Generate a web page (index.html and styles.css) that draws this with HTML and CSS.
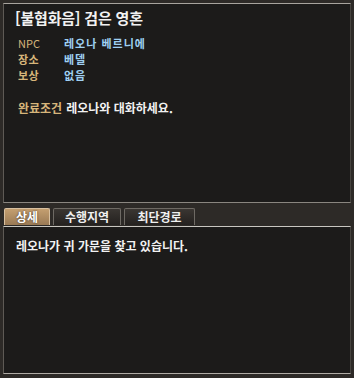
FILE: index.html
```html
<!DOCTYPE html>
<html lang="ko">
<head>
<meta charset="utf-8">
<link rel="stylesheet" href="styles.css">
</head>
<body>
<div class="frame">
  <section class="panel top">
    <h1 class="title">[불협화음] 검은 영혼</h1>
    <div class="info">
      <span class="label latin">NPC</span><span class="value">레오나 베르니에</span>
      <span class="label">장소</span><span class="value">베델</span>
      <span class="label">보상</span><span class="value">없음</span>
    </div>
    <div class="cond"><span class="label">완료조건</span><span class="text">레오나와 대화하세요.</span></div>
  </section>
  <nav class="tabs">
    <div class="tab active">상세</div>
    <div class="tab t2">수행지역</div>
    <div class="tab t3">최단경로</div>
  </nav>
  <section class="panel bottom">
    <p class="desc">레오나가 귀 가문을 찾고 있습니다.</p>
  </section>
</div>
</body>
</html>
```
FILE: styles.css
```css
* { box-sizing: border-box; }
html, body { margin: 0; padding: 0; }
body {
  width: 354px;
  height: 378px;
  background: #2d2a27;
  font-family: "Noto Sans CJK KR", "Noto Sans", sans-serif;
  font-weight: 700;
  overflow: hidden;
}
.frame {
  padding: 3px 3px 0 3px;
  display: flex;
  flex-direction: column;
  height: 378px;
}
.panel {
  background: #1c1b1a;
  border-top: 1px solid #a8a49e;
  border-left: 1px solid #5e5a55;
  border-right: 1px solid #46433f;
  border-bottom: 1px solid #8a8680;
}
.top {
  height: 200px;
  padding: 4px 0 0 11px;
}
.title {
  margin: 0;
  font-size: 15px;
  line-height: 20px;
  font-weight: 700;
  color: #f2f2f2;
  letter-spacing: -0.2px;
}
.info {
  margin-top: 7px;
  display: grid;
  grid-template-columns: 46px auto;
  padding-left: 3px;
  font-size: 11px;
  line-height: 16px;
  letter-spacing: 1px;
}
.label { color: #d6b57a; font-weight: 700; }
.info .label { letter-spacing: 0.3px; }
.info .latin { font-weight: 400; letter-spacing: 0; }
.value { color: #9fd0f2; }
.cond {
  margin-top: 16px;
  padding-left: 3px;
  font-size: 12px;
  line-height: 18px;
  display: flex;
  gap: 4px;
}
.text, .desc { color: #f2f2f2; }
.tabs {
  height: 23px;
  display: flex;
  align-items: flex-end;
  padding: 0 0 1px 1px;
  gap: 3px;
}
.tab {
  height: 17px;
  font-size: 12px;
  line-height: 15px;
  color: #f0f0f0;
  text-align: center;
  background: linear-gradient(#3a3632, #24211f);
  border: 1px solid #6e6a64;
  border-bottom: none;
  border-radius: 2px 2px 0 0;
}
.tab.active {
  width: 46px;
  background: linear-gradient(#c49f70, #9a7a55);
  border-color: #d8c0a0;
  color: #fff;
  text-shadow: 0 0 2px #3a2a18;
}
.t2 { width: 68px; }
.t3 { width: 71px; }
.bottom {
  height: 148px;
  border-top-color: #c8c6c0;
  border-bottom-color: #b0aca6;
  padding: 10px 0 0 12px;
}
.desc {
  margin: 0;
  font-size: 12px;
  line-height: 18px;
}
```
